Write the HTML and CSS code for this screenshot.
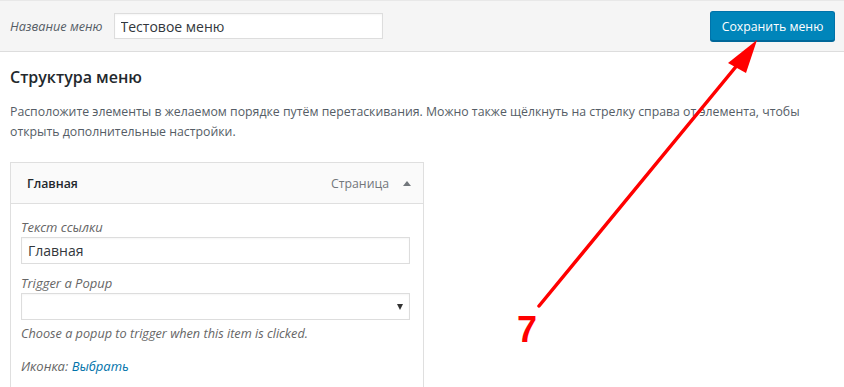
FILE: index.html
```html
<!DOCTYPE html>
<html lang="ru">
<head>
    <meta charset="UTF-8">
    <title>Меню</title>
    <link rel="stylesheet" href="styles.css">
</head>
<body>
    <div class="menu-header">
        <label class="menu-name-label" for="menuName">Название меню</label>
        <input type="text" id="menuName" class="menu-name" value="Тестовое меню">
        <button class="save-button">Сохранить меню</button>
    </div>

    <div class="menu-body">
        <h2>Структура меню</h2>
        <p class="description">
            Расположите элементы в желаемом порядке путём перетаскивания. Можно также щёлкнуть на стрелку справа от элемента, чтобы открыть дополнительные настройки.
        </p>

        <div class="menu-item">
            <div class="item-bar">
                <span class="item-title">Главная</span>
                <span class="item-type">Страница</span>
                <span class="item-toggle"></span>
            </div>
            <div class="item-settings">
                <label class="field-label" for="linkText">Текст ссылки</label>
                <input type="text" id="linkText" class="field-input" value="Главная">

                <label class="field-label" for="popup">Trigger a Popup</label>
                <div class="select-box"><span class="select-arrow"></span></div>
                <p class="field-help">Choose a popup to trigger when this item is clicked.</p>

                <p class="icon-field">Иконка: <a href="#">Выбрать</a></p>
            </div>
        </div>
    </div>

    <!-- annotation -->
    <svg class="annotation" width="844" height="387" viewBox="0 0 844 387">
        <line x1="539" y1="306" x2="748" y2="52" stroke="#ff0000" stroke-width="3.5" stroke-linecap="round"/>
        <polygon points="757,40 728,63 746,73" fill="#ff0000"/>
        <text x="517" y="342" class="annotation-num">7</text>
    </svg>
</body>
</html>
```

FILE: styles.css
```css
:root {
    --text-primary: #23282d;
    --text-secondary: #555d66;
    --border-color: #dddddd;
    --link-color: #0073aa;
}

body {
    margin: 0;
    font-family: "Open Sans", sans-serif;
    font-size: 13px;
    color: #444;
    background: #ffffff;
    position: relative;
    width: 844px;
    height: 387px;
    overflow: hidden;
}

.menu-header {
    display: flex;
    align-items: center;
    height: 50px;
    padding: 0 9px 0 10px;
    background: #f5f5f5;
    border-top: 1px solid #e8e8e8;
    border-bottom: 1px solid #dddddd;
}

.menu-name-label {
    font-style: italic;
    font-size: 12.7px;
    color: #555d66;
    margin-right: 11px;
}

.menu-name {
    width: 269px;
    height: 26px;
    box-sizing: border-box;
    border: 1px solid #dddddd;
    padding: 0 6px;
    font-family: inherit;
    font-size: 14px;
    color: #32373c;
    box-shadow: inset 0 1px 2px rgba(0, 0, 0, 0.04);
}

.save-button {
    margin-left: auto;
    height: 30px;
    width: 125px;
    padding: 0;
    background: #0085ba;
    border: 1px solid #0073aa;
    border-bottom-color: #006799;
    box-shadow: 0 1px 0 #006799;
    border-radius: 3px;
    color: #ffffff;
    font-family: inherit;
    font-size: 12.3px;
}

.menu-body {
    padding: 0 10px;
}

h2 {
    margin: 14px 0 0;
    font-size: 16px;
    font-weight: 600;
    color: var(--text-primary);
}

.description {
    margin: 14px 0 0;
    font-size: 12.3px;
    line-height: 20px;
    color: var(--text-secondary);
    max-width: 800px;
}

.menu-item {
    width: 414px;
    margin-top: 20px;
    border: 1px solid #dfdfdf;
    box-sizing: border-box;
}

.item-bar {
    display: flex;
    align-items: center;
    height: 40px;
    padding: 0 12px 0 16px;
    background: #fafafa;
    border-bottom: 1px solid #dfdfdf;
}

.item-title {
    font-weight: 600;
    font-size: 12.3px;
    color: var(--text-primary);
}

.item-type {
    margin-left: auto;
    font-size: 12.3px;
    color: #72777c;
}

.item-toggle {
    width: 0;
    height: 0;
    margin-left: 14px;
    border-left: 4px solid transparent;
    border-right: 4px solid transparent;
    border-bottom: 5px solid #72777c;
}

.item-settings {
    padding: 14px 13px 12px 10px;
}

.field-label {
    display: block;
    font-style: italic;
    color: #666;
    line-height: 18px;
}

.field-input,
.select-box {
    display: block;
    width: 389px;
    height: 27px;
    box-sizing: border-box;
    border: 1px solid #dddddd;
    box-shadow: inset 0 1px 2px rgba(0, 0, 0, 0.04);
    margin: 1px 0 10px;
}

.field-input {
    padding: 0 6px;
    font-family: inherit;
    font-size: 14px;
    color: #32373c;
}

.select-box {
    display: flex;
    align-items: center;
    justify-content: flex-end;
    padding-right: 6px;
    margin-bottom: 3px;
}

.select-arrow {
    width: 0;
    height: 0;
    border-left: 3.5px solid transparent;
    border-right: 3.5px solid transparent;
    border-top: 6px solid #333;
}

.field-help {
    margin: 0;
    font-style: italic;
    font-size: 12.7px;
    color: #666;
    line-height: 20px;
}

.icon-field {
    margin: 14px 0 0;
    font-style: italic;
    color: #666;
}

.icon-field a {
    color: var(--link-color);
    text-decoration: none;
}

.annotation {
    position: absolute;
    left: 0;
    top: 0;
    pointer-events: none;
}

.annotation-num {
    font-family: "Liberation Sans", sans-serif;
    font-weight: 700;
    font-size: 36px;
    fill: #ff0000;
}
```
